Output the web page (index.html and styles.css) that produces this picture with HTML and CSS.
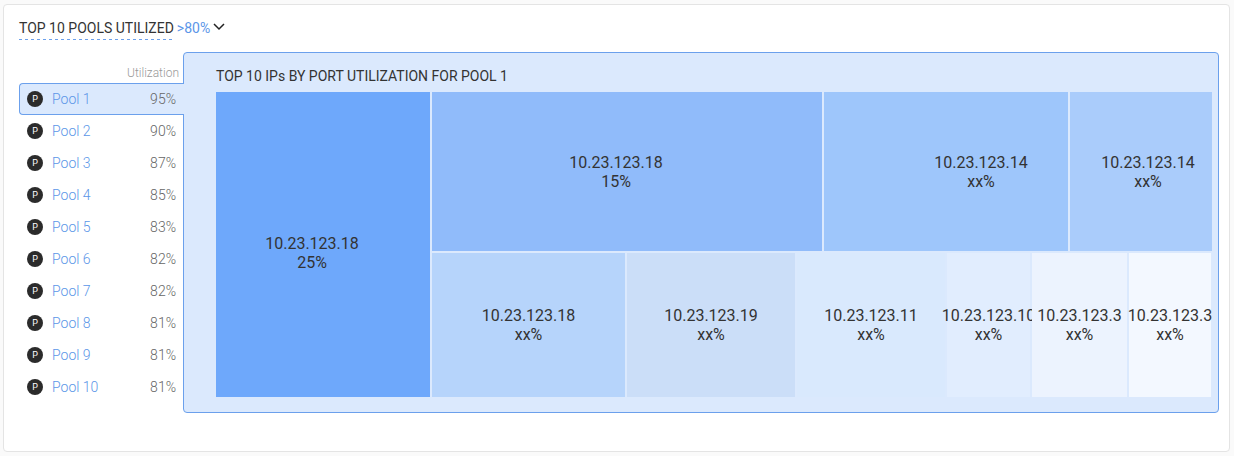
FILE: index.html
```
<!DOCTYPE html>
<html lang="en">
<head>
<meta charset="utf-8">
<meta name="viewport" content="width=device-width, initial-scale=1">
<title>Top 10 pools utilized</title>
<link rel="stylesheet" href="styles.css">
</head>
<body>
<main class="card">
  <header class="card-header">
    <h1 class="card-title"><label for="threshold">TOP 10 POOLS UTILIZED</label></h1>
    <div class="threshold">
      <select id="threshold" class="threshold-select"><option>&gt;80%</option></select>
      <svg class="chevron" viewBox="0 0 12 8" aria-hidden="true"><path d="M1 1l5 5 5-5"/></svg>
    </div>
  </header>
  <div class="content">
    <table class="pools">
      <thead>
        <tr><th class="pools-head" colspan="2" scope="col">Utilization</th></tr>
      </thead>
      <tbody>
        <tr class="pool selected"><td class="pool-name"><a class="pool-link" href="#"><span class="badge">P</span>Pool 1</a></td><td class="pool-value">95%</td></tr>
        <tr class="pool"><td class="pool-name"><a class="pool-link" href="#"><span class="badge">P</span>Pool 2</a></td><td class="pool-value">90%</td></tr>
        <tr class="pool"><td class="pool-name"><a class="pool-link" href="#"><span class="badge">P</span>Pool 3</a></td><td class="pool-value">87%</td></tr>
        <tr class="pool"><td class="pool-name"><a class="pool-link" href="#"><span class="badge">P</span>Pool 4</a></td><td class="pool-value">85%</td></tr>
        <tr class="pool"><td class="pool-name"><a class="pool-link" href="#"><span class="badge">P</span>Pool 5</a></td><td class="pool-value">83%</td></tr>
        <tr class="pool"><td class="pool-name"><a class="pool-link" href="#"><span class="badge">P</span>Pool 6</a></td><td class="pool-value">82%</td></tr>
        <tr class="pool"><td class="pool-name"><a class="pool-link" href="#"><span class="badge">P</span>Pool 7</a></td><td class="pool-value">82%</td></tr>
        <tr class="pool"><td class="pool-name"><a class="pool-link" href="#"><span class="badge">P</span>Pool 8</a></td><td class="pool-value">81%</td></tr>
        <tr class="pool"><td class="pool-name"><a class="pool-link" href="#"><span class="badge">P</span>Pool 9</a></td><td class="pool-value">81%</td></tr>
        <tr class="pool"><td class="pool-name"><a class="pool-link" href="#"><span class="badge">P</span>Pool 10</a></td><td class="pool-value">81%</td></tr>
      </tbody>
    </table>
    <section class="panel">
      <h2 class="panel-title">TOP 10 IPs BY PORT UTILIZATION FOR POOL 1</h2>
      <div class="treemap">
        <div class="tile shade-1">10.23.123.18<br>25%</div>
        <div class="tile-rows">
          <div class="tile-row tile-row-top">
            <div class="tile shade-2">10.23.123.18<br>15%</div>
            <div class="tile shade-3">10.23.123.14<br>xx%</div>
            <div class="tile shade-4">10.23.123.14<br>xx%</div>
          </div>
          <div class="tile-row tile-row-bottom">
            <div class="tile shade-5">10.23.123.18<br>xx%</div>
            <div class="tile shade-6">10.23.123.19<br>xx%</div>
            <div class="tile shade-7">10.23.123.11<br>xx%</div>
            <div class="tile shade-8">10.23.123.10<br>xx%</div>
            <div class="tile shade-9">10.23.123.3<br>xx%</div>
            <div class="tile shade-10">10.23.123.3<br>xx%</div>
          </div>
        </div>
      </div>
    </section>
  </div>
</main>
</body>
</html>
```
FILE: styles.css
```
* {
  box-sizing: border-box;
}

body {
  margin: 0;
  padding: 4px 4px 4px 3px;
  background: #fafafa;
  color: #333;
  font-family: Roboto, "Liberation Sans", sans-serif;
  font-size: 14px;
}

.card {
  padding: 14px 10px 38px 15px;
  border: 1px solid #e4e4e4;
  border-radius: 4px;
  background: #fff;
}

.card-header {
  display: flex;
  align-items: flex-start;
  gap: 3px;
  height: 33px;
}

.card-title {
  margin: 0;
  padding-bottom: 2px;
  background: repeating-linear-gradient(90deg, #6ba0ec 0 3px, transparent 3px 6px) left bottom / 153px 1px no-repeat;
  font-size: 14px;
  font-weight: 400;
  line-height: 19px;
}

.threshold {
  display: flex;
  align-items: center;
  gap: 2px;
}

.threshold-select {
  appearance: none;
  padding: 0;
  border: 0;
  background: transparent;
  color: #5b96e8;
  font: inherit;
  line-height: 19px;
}

.chevron {
  width: 12px;
  height: 8px;
  margin-bottom: 3px;
  fill: none;
  stroke: #222;
  stroke-width: 1.5;
}

.content {
  display: flex;
  align-items: flex-start;
}

.pools {
  position: relative;
  z-index: 1;
  flex: none;
  width: 165px;
  margin-top: 11px;
  border-spacing: 0;
  font-weight: 300;
}

.pools-head {
  height: 20px;
  padding: 0 5px 0 0;
  color: #999;
  font-size: 12px;
  font-weight: 300;
  line-height: 20px;
  text-align: right;
}

.pool-name,
.pool-value {
  height: 32px;
  padding: 0;
  border: 0 solid #6ba0ec;
}

.pool-name {
  padding-left: 8px;
}

.pool-value {
  padding-right: 8px;
  color: #666;
  text-align: right;
}

.selected .pool-name,
.selected .pool-value {
  border-width: 1px 0;
  background: #dbe9fd;
}

.selected .pool-name {
  padding-left: 7px;
  border-left-width: 1px;
  border-radius: 4px 0 0 4px;
}

.pool-link {
  display: flex;
  align-items: center;
  gap: 9px;
  color: #5b96e8;
  line-height: 16px;
  text-decoration: none;
}

.badge {
  width: 16px;
  height: 16px;
  border-radius: 50%;
  background: #2b2b2b;
  color: #fff;
  font-size: 9px;
  font-weight: 400;
  line-height: 16px;
  text-align: center;
}

.panel {
  flex: 1;
  min-width: 0;
  margin-left: -1px;
  padding: 14px 6px 15px 32px;
  border: 1px solid #6ba0ec;
  border-radius: 4px;
  background: #dbe9fd;
}

.panel-title {
  margin: 0 0 6px;
  font-size: 14px;
  font-weight: 400;
  line-height: 19px;
}

.treemap {
  display: grid;
  grid-template-columns: minmax(0, 214fr) minmax(0, 780fr);
  gap: 2px;
}

.tile-rows {
  display: grid;
  gap: 2px;
}

.tile-row {
  display: grid;
  gap: 2px;
}

.tile-row-top {
  grid-template-columns: minmax(0, 390fr) minmax(0, 244fr) minmax(0, 142fr);
  min-height: 159px;
}

.tile-row-bottom {
  grid-template-columns: minmax(0, 193fr) minmax(0, 168fr) minmax(0, 148fr) minmax(0, 83fr) minmax(0, 95fr) minmax(0, 82fr);
  min-height: 144px;
  padding-right: 1px;
}

.tile {
  display: flex;
  flex-direction: column;
  align-items: center;
  justify-content: center;
  min-width: 0;
  font-size: 16px;
  line-height: 19px;
  text-align: center;
}

.shade-1 { padding: 16px 22px 0 0; background: #6ea8fb; }
.shade-2 { padding-right: 22px; background: #90bbfa; }
.shade-3 { padding-left: 70px; background: #9ec6fb; }
.shade-4 { padding-left: 14px; background: #aaccfb; }
.shade-5 { background: #b6d4fb; }
.shade-6 { background: #cbdef8; }
.shade-7 { background: #d9e9fd; }
.shade-8 { background: #e1edfe; }
.shade-9 { background: #ecf3fe; }
.shade-10 { background: #f3f8ff; }
```
